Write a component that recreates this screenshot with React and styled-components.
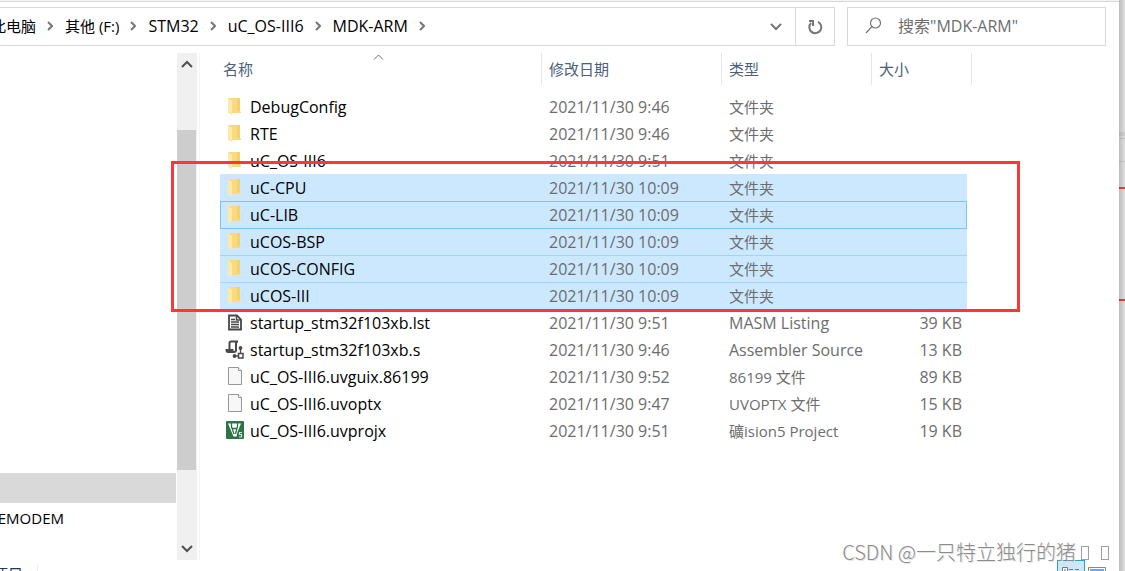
import React from 'react';
import styled, {createGlobalStyle} from 'styled-components';

const GlobalStyle = createGlobalStyle`
  * {
    box-sizing: border-box;
  }

  body {
    background-color: #ffffff;
    color: #000000;
    font-family: 'Open Sans', 'Noto Sans CJK SC', sans-serif;
    font-size: 15px;
    line-height: 20px;
    margin: 0;
    overflow: hidden;
  }

  button,
  input {
    background: none;
    border: 0;
    color: inherit;
    font: inherit;
    margin: 0;
    padding: 0;
  }
`;

const Desktop = styled.div`
  display: flex;
  height: 100vh;
  overflow: hidden;
`;

const Window = styled.main`
  background-color: #ffffff;
  border-top: 1px solid #f5f5f5;
  display: flex;
  flex: 1;
  flex-direction: column;
  height: calc(100vh + 17px);
  min-width: 0;
  position: relative;
`;

// sliver of the window behind, seen through the drop shadow
const Behind = styled.div`
  background:
    linear-gradient(to right, rgba(0, 0, 0, .2), rgba(0, 0, 0, .05)),
    linear-gradient(
      to bottom,
      #ebebeb 132px, #dcdcdc 132px, #dcdcdc 136px,
      #ebebeb 136px, #ebebeb 138px, #d4d4d4 138px, #d4d4d4 139px,
      #ebebeb 139px, #ebebeb 161px, #d4d4d4 161px, #d4d4d4 162px,
      #ebebeb 162px, #ebebeb 187px, #f74545 187px, #f74545 189px,
      #ebebeb 189px, #ebebeb 299px, #f74545 299px, #f74545 301px,
      #ebebeb 301px
    );
  flex: none;
  width: 6px;
`;

const Toolbar = styled.header`
  border-top: 1px solid #d9d9d9;
  display: flex;
  gap: 12px;
  padding: 5px 13px 7px 0;
`;

const AddressBar = styled.nav`
  align-items: stretch;
  border: 1px solid #d9d9d9;
  border-left: 0;
  display: flex;
  flex: 1;
  height: 39px;
  min-width: 0;
`;

const Crumbs = styled.ol`
  align-items: center;
  display: flex;
  flex: 1;
  list-style: none;
  margin: 0;
  min-width: 0;
  overflow: hidden;
  padding: 0 0 2px;
  white-space: nowrap;
`;

const Crumb = styled.li`
  align-items: center;
  display: flex;
  font-size: ${props => props.$latin ? '16px' : '15px'};

  svg {
    margin: 0 12px 0 11px;
  }
`;

const CrumbButton = styled.button`
  display: flex;
  justify-content: flex-end;
  overflow: hidden;
  ${props => props.$clip ? 'width: 36px' : ''};
`;

const BarButton = styled.button`
  align-items: center;
  border-left: ${props => props.$divided ? '1px solid #d9d9d9' : '0'};
  color: #767676;
  display: flex;
  justify-content: center;
  width: 39px;
`;

const Search = styled.label`
  align-items: center;
  border: 1px solid #d9d9d9;
  color: #6d6d6d;
  display: flex;
  font-size: 16px;
  gap: 16px;
  height: 39px;
  padding: 0 17px 2px;
  width: 259px;

  svg {
    flex: none;
  }
`;

const SearchInput = styled.input`
  flex: 1;
  min-width: 0;
  outline: 0;

  &::placeholder {
    color: #6d6d6d;
    opacity: 1;
  }
`;

const Body = styled.div`
  display: flex;
  flex: 1;
  min-height: 0;
`;

const Tree = styled.ul`
  display: flex;
  flex: none;
  flex-direction: column;
  justify-content: flex-end;
  list-style: none;
  margin: 0;
  padding: 0 1px 27px 0;
  width: 177px;
`;

const TreeItem = styled.li`
  background-color: ${props => props.$selected ? '#d9d9d9' : 'transparent'};
  height: 30px;
  line-height: 30px;
`;

const ClippedText = styled.span`
  display: flex;
  justify-content: flex-end;
  overflow: hidden;
  white-space: nowrap;
  width: ${props => props.$width}px;
`;

const ScrollBar = styled.div`
  background-color: #f0f0f0;
  display: flex;
  flex: none;
  flex-direction: column;
  width: 20px;
`;

const ScrollButton = styled.button`
  align-items: center;
  color: #505050;
  display: flex;
  height: 22px;
  justify-content: center;
`;

const ScrollTrack = styled.div`
  display: grid;
  flex: 1;
  grid-template-rows: 55fr 340fr 68fr;
  padding-right: 1px;
`;

const ScrollThumb = styled.div`
  background-color: #cdcdcd;
  grid-row: 2;
`;

const Files = styled.section`
  border-left: 1px solid #f5f5f5;
  flex: 1;
  margin-left: 2px;
  min-width: 0;
  padding-left: 20px;
`;

const Table = styled.table`
  border-collapse: separate;
  border-spacing: 0;
  color: #6d6d6d;
  table-layout: fixed;
  width: 752px;
`;

const HeadCell = styled.th`
  border-left: ${props => props.$first ? '0' : '1px solid #e5e5e5'};
  border-right: ${props => props.$last ? '1px solid #e5e5e5' : '0'};
  color: #4c607a;
  font-weight: normal;
  height: 32px;
  padding: 0 0 0 ${props => props.$first ? '3px' : '7px'};
  position: relative;
  text-align: left;
`;

const SortMark = styled.span`
  left: 153px;
  line-height: 0;
  position: absolute;
  top: 1px;
`;

const Gap = styled.td`
  height: 8px;
  padding: 0;
`;

const Cell = styled.td`
  background-color: ${props => props.$selected ? '#cce8ff' : 'transparent'};
  box-shadow: ${props => props.$edge ? `inset 0 1px ${props.$edge}` : 'none'};
  font-size: ${props => props.$han ? '15px' : '16px'};
  height: 27px;
  padding: 0 0 0 8px;
  white-space: nowrap;
`;

const NameCell = styled(Cell)`
  border-left: ${props => props.$focused ? '1px solid #7bc3ff' : '0'};
  color: #000000;
  padding-left: ${props => props.$focused ? '4px' : '5px'};
`;

const SizeCell = styled(Cell)`
  border-right: ${props => props.$focused ? '1px solid #7bc3ff' : '0'};
  padding-right: 5px;
  text-align: right;
`;

const FileName = styled.span`
  align-items: center;
  display: flex;
  gap: 5px;
`;

const StatusBar = styled.footer`
  align-items: center;
  color: #1e395b;
  display: flex;
  flex: none;
  height: 28px;
  padding-right: 11px;
`;

const StatusCount = styled.span`
  border-right: 1px solid #f0f0f0;
  flex: none;
  padding-right: 14px;
`;

const ViewButtons = styled.div`
  align-self: stretch;
  display: flex;
  margin-left: auto;
`;

const ViewButton = styled.button`
  align-items: flex-start;
  background-color: ${props => props.$pressed ? '#cce8f6' : 'transparent'};
  border: 1px solid ${props => props.$pressed ? '#26a0da' : 'transparent'};
  display: flex;
  justify-content: center;
  padding-top: 6px;
  width: ${props => props.$pressed ? '28px' : '23px'};
`;

const Highlight = styled.div`
  border: 3px solid #fb3838;
  height: 151px;
  left: 171px;
  pointer-events: none;
  position: absolute;
  top: 160px;
  width: 849px;
`;

const Watermark = styled.div`
  bottom: 22px;
  color: #8c8c8c;
  font-family: 'Noto Sans CJK SC', sans-serif;
  font-size: 20px;
  font-weight: 300;
  line-height: 28px;
  position: absolute;
  right: 10px;
  text-shadow: 1px 1px #e4e4e4;
  white-space: nowrap;
`;

const MissingGlyph = styled.span`
  border: 1px solid #a0a0a0;
  display: inline-block;
  height: 14px;
  margin: 0 0 0 5px;
  width: 8px;

  & + & {
    margin-left: 12px;
  }
`;

const Arrow = ({width, height, points, stroke = 'currentColor', weight = 2}) => (
  <svg width={width} height={height} viewBox={`0 0 ${width} ${height}`} fill="none" stroke={stroke} strokeWidth={weight}>
    <polyline points={points} />
  </svg>
);

const FolderIcon = () => (
  <svg width="20" height="20" viewBox="0 0 20 20">
    <path d="M3 1H15V14L16 15V16H3Z" fill="#f9da80" />
    <path d="M12 1H15V14H12Z" fill="#f4d071" />
    <path d="M3 1L7 4V18L3 16Z" fill="#ffe9a6" />
  </svg>
);

const ListingIcon = () => (
  <svg width="20" height="20" viewBox="0 0 20 20" fill="none" stroke="#474747">
    <path d="M4 2.500H12L16 6.500V16.500H4Z" strokeWidth="1.800" />
    <path d="M11.500 2V7H16" strokeWidth="1.500" />
    <path d="M6 6.500H10M6 9H14M6 11.500H14M6 14H14" strokeWidth="1.300" />
  </svg>
);

const AssemblerIcon = () => (
  <svg width="20" height="20" viewBox="0 0 20 20" fill="none" stroke="#4a4a4a">
    <path d="M4.500 9.500V3Q4.500 1.500 6 1.500H13Q11 1.500 11 3.500V10Q11 12 9 12H3Q1.500 12 1.500 10H8.500" strokeWidth="2" />
    <path d="M15.500 7V13M9 16H13" strokeWidth="1.300" />
    <path d="M13.500 13.500H18V18H13.500Z" strokeWidth="1.500" />
    <circle cx="15.500" cy="8" r="1.900" fill="#4a4a4a" stroke="none" />
    <circle cx="9.500" cy="16" r="1.900" fill="#4a4a4a" stroke="none" />
  </svg>
);

const BlankIcon = () => (
  <svg width="20" height="20" viewBox="0 0 20 20" fill="#f7f7f7" stroke="#979797">
    <path d="M3.500 .500H13.500L16.500 3.500V17.500H3.500Z" />
    <path d="M13.500 .500V3.500H16.500" fill="#ffffff" />
  </svg>
);

const ProjectIcon = () => (
  <svg width="20" height="20" viewBox="0 0 20 20" fill="none">
    <rect x="1" y="0" width="18" height="18" rx="1" fill="#2f7349" />
    <path d="M3 2.500H16L12.500 11L11.500 15.500H8.500Z" fill="#ffffff" />
    <path d="M6.500 2V6Q6.500 7.500 9.500 7.500T12.500 6V2M7 7L9 13M12 7L10.500 13" stroke="#2f7349" strokeWidth="1.300" />
    <path d="M17 11.500H14.500V13.500H16.500V16H14" stroke="#cfe5d6" strokeWidth="1.200" />
  </svg>
);

const icons = {
  folder: FolderIcon,
  listing: ListingIcon,
  assembler: AssemblerIcon,
  blank: BlankIcon,
  project: ProjectIcon
};

const hasHan = text => /[\u4e00-\u9fff]/.test(text);

const crumbs = ['此电脑', '其他 (F:)', 'STM32', 'uC_OS-III6', 'MDK-ARM'];

const files = [
  {icon: 'folder', name: 'DebugConfig', date: '2021/11/30 9:46', type: '文件夹'},
  {icon: 'folder', name: 'RTE', date: '2021/11/30 9:46', type: '文件夹'},
  {icon: 'folder', name: 'uC_OS-III6', date: '2021/11/30 9:51', type: '文件夹'},
  {icon: 'folder', name: 'uC-CPU', date: '2021/11/30 10:09', type: '文件夹', selected: true},
  {icon: 'folder', name: 'uC-LIB', date: '2021/11/30 10:09', type: '文件夹', selected: true, focused: true, edge: '#7bc3ff'},
  {icon: 'folder', name: 'uCOS-BSP', date: '2021/11/30 10:09', type: '文件夹', selected: true, edge: '#7bc3ff'},
  {icon: 'folder', name: 'uCOS-CONFIG', date: '2021/11/30 10:09', type: '文件夹', selected: true, edge: '#a3d4ff'},
  {icon: 'folder', name: 'uCOS-III', date: '2021/11/30 10:09', type: '文件夹', selected: true, edge: '#a3d4ff'},
  {icon: 'listing', name: 'startup_stm32f103xb.lst', date: '2021/11/30 9:51', type: 'MASM Listing', size: '39 KB'},
  {icon: 'assembler', name: 'startup_stm32f103xb.s', date: '2021/11/30 9:46', type: 'Assembler Source', size: '13 KB'},
  {icon: 'blank', name: 'uC_OS-III6.uvguix.86199', date: '2021/11/30 9:52', type: '86199 文件', size: '89 KB'},
  {icon: 'blank', name: 'uC_OS-III6.uvoptx', date: '2021/11/30 9:47', type: 'UVOPTX 文件', size: '15 KB'},
  {icon: 'project', name: 'uC_OS-III6.uvprojx', date: '2021/11/30 9:51', type: '礦ision5 Project', size: '19 KB'}
];

const FileRow = ({file}) => {
  const FileIcon = icons[file.icon];
  const state = {$selected: file.selected, $focused: file.focused, $edge: file.edge};

  return (
    <tr>
      <NameCell {...state}>
        <FileName><FileIcon />{file.name}</FileName>
      </NameCell>
      <Cell {...state}>{file.date}</Cell>
      <Cell {...state} $han={hasHan(file.type)}>{file.type}</Cell>
      <SizeCell {...state}>{file.size}</SizeCell>
    </tr>
  );
};

export default function App() {
  return (
    <Desktop>
      <GlobalStyle />
      <Window>
        <Toolbar>
          <AddressBar>
            <Crumbs>
              {crumbs.map((crumb, i) =>
                <Crumb key={crumb} $latin={!hasHan(crumb)}>
                  <CrumbButton $clip={i === 0}>{crumb}</CrumbButton>
                  <Arrow width={6} height={10} points="1,1 5,5 1,9" stroke="#767676" />
                </Crumb>
              )}
            </Crumbs>
            <BarButton aria-label="Previous locations">
              <Arrow width={12} height={8} points="1,1 6,6 11,1" />
            </BarButton>
            <BarButton $divided aria-label="Refresh">
              <svg width="16" height="16" viewBox="0 0 16 16" fill="none" stroke="currentColor" strokeWidth="2">
                <path d="M11 2.800A6 6 0 1 1 4 4" />
                <path d="M2 2H6V7" />
              </svg>
            </BarButton>
          </AddressBar>
          <Search>
            <svg width="17" height="17" viewBox="0 0 17 17" fill="none" stroke="#767676" strokeWidth="1.200">
              <circle cx="10.500" cy="6" r="5" />
              <path d="M7 9.500L1 16" />
            </svg>
            <SearchInput type="text" aria-label="搜索" placeholder={'搜索"MDK-ARM"'} />
          </Search>
        </Toolbar>
        <Body>
          <Tree>
            <TreeItem $selected />
            <TreeItem><ClippedText $width={64}>EMODEM</ClippedText></TreeItem>
          </Tree>
          <ScrollBar>
            <ScrollButton aria-label="Scroll up">
              <Arrow width={12} height={8} points="1,7 6,2 11,7" />
            </ScrollButton>
            <ScrollTrack><ScrollThumb /></ScrollTrack>
            <ScrollButton aria-label="Scroll down">
              <Arrow width={12} height={8} points="1,1 6,6 11,1" />
            </ScrollButton>
          </ScrollBar>
          <Files>
            <Table>
              <colgroup>
                <col width="321" />
                <col width="180" />
                <col width="150" />
                <col width="96" />
                <col width="5" />
              </colgroup>
              <thead>
                <tr>
                  <HeadCell $first>
                    名称
                    <SortMark>
                      <Arrow width={11} height={6} points="1,5.5 5.5,1 10,5.5" stroke="#6d6d6d" weight={1} />
                    </SortMark>
                  </HeadCell>
                  <HeadCell>修改日期</HeadCell>
                  <HeadCell>类型</HeadCell>
                  <HeadCell $last colSpan={2}>大小</HeadCell>
                </tr>
              </thead>
              <tbody>
                <tr><Gap colSpan={5} /></tr>
                {files.map(file => <FileRow key={file.name} file={file} />)}
              </tbody>
            </Table>
          </Files>
        </Body>
        <StatusBar>
          <StatusCount>
            <ClippedText $width={23}>项目</ClippedText>
          </StatusCount>
          <ViewButtons>
            <ViewButton $pressed aria-label="Details">
              <svg width="18" height="14" viewBox="0 0 18 14" fill="none" stroke="#7a7a7a">
                <path d="M.5 .5H5.500V13.500H.5Z" fill="#ffffff" />
                <path d="M7 2.500H11M13 2.500H17M7 6.500H11M13 6.500H17" />
                <path d="M3 2V12" stroke="#3c6ea5" />
              </svg>
            </ViewButton>
            <ViewButton aria-label="Large icons">
              <svg width="18" height="14" viewBox="0 0 18 14">
                <path d="M.5 .5H17.500V13.500H.5Z" fill="#ffffff" stroke="#8a8a8a" />
                <path d="M2 2H16V12H2Z" fill="#6aa5ff" />
              </svg>
            </ViewButton>
          </ViewButtons>
        </StatusBar>
        <Highlight />
        <Watermark>CSDN @一只特立独行的猪<MissingGlyph /><MissingGlyph /></Watermark>
      </Window>
      <Behind />
    </Desktop>
  );
}
